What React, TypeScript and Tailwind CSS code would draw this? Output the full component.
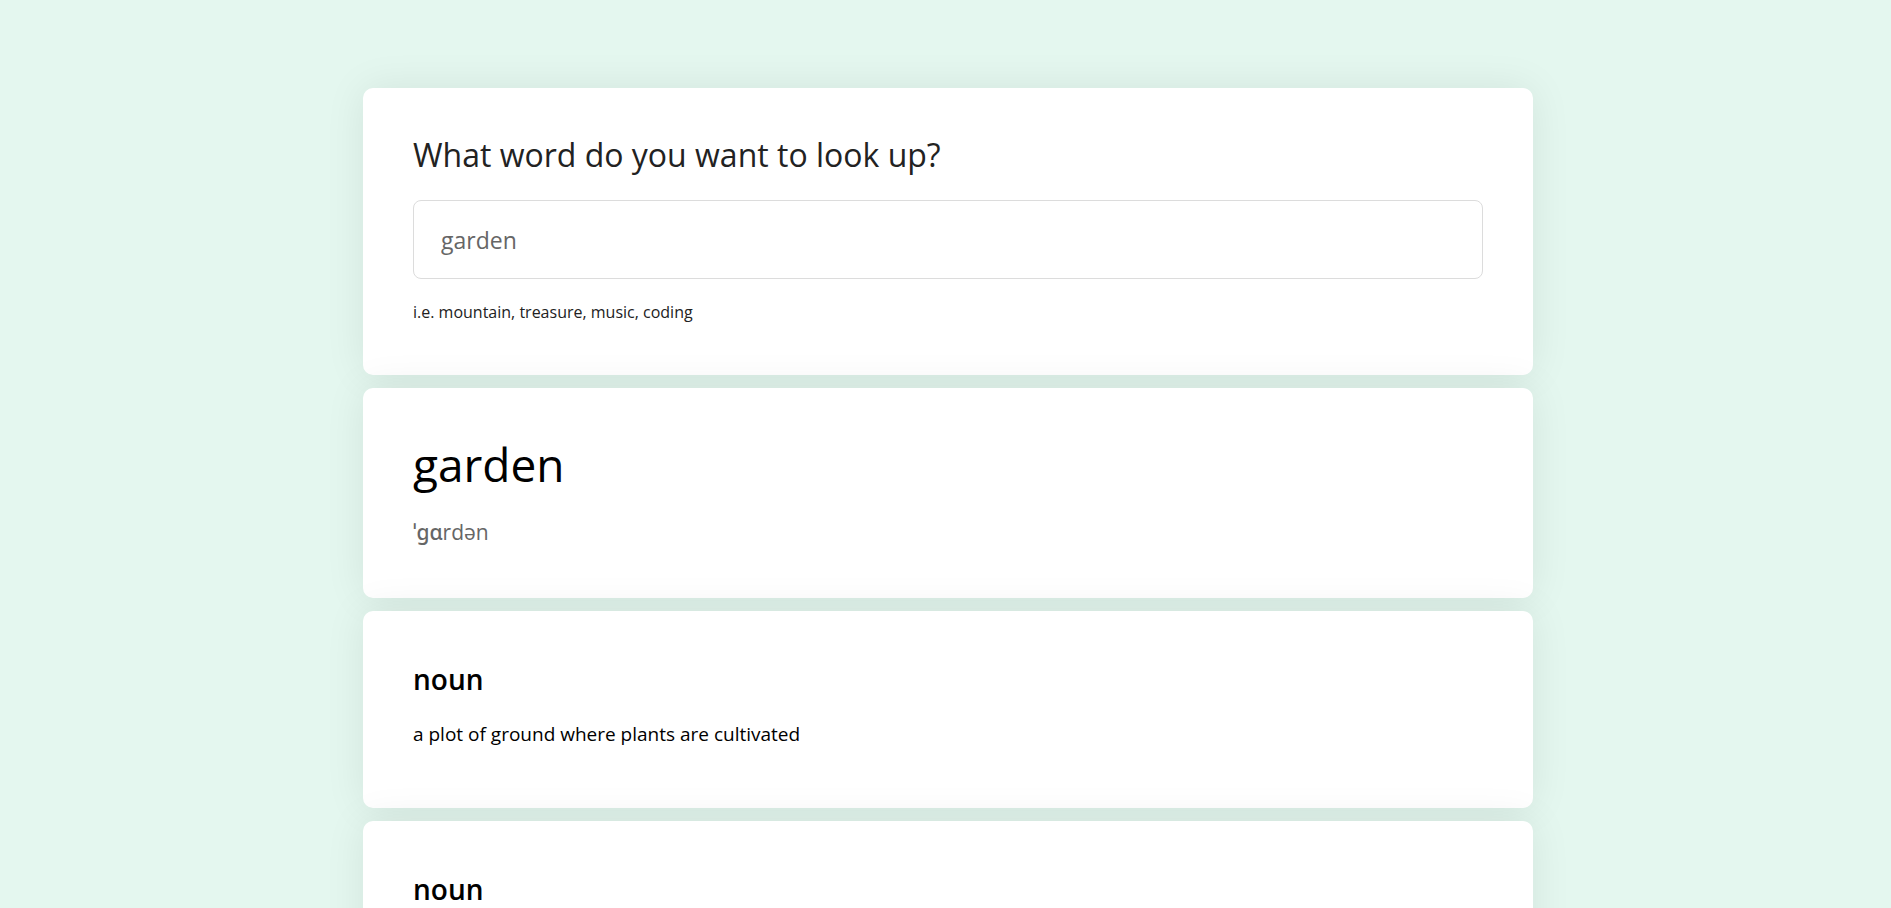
import React from "react";

const font = { fontFamily: '"Open Sans", "Noto Sans", sans-serif' };

function Card({ children, className = "" }: { children: React.ReactNode; className?: string }) {
  return (
    <section
      className={`bg-white rounded-[10px] px-[50px] shadow-[0_0_40px_rgba(0,0,0,0.08)] ${className}`}
    >
      {children}
    </section>
  );
}

export default function App() {
  return (
    <div className="min-h-screen bg-[#e4f7ef] pt-[88px] pb-10 pl-[5px]" style={font}>
      <div className="mx-auto w-[1170px] flex flex-col gap-[13px]">
        <Card className="pt-[47px] pb-[53px]">
          <h1 className="text-[32px] leading-[40px] text-[#222] font-normal">
            What word do you want to look up?
          </h1>
          <input
            type="search"
            placeholder="garden"
            className="mt-[25px] block w-full h-[79px] rounded-lg border border-[#dcdcdc] px-[27px] text-[23px] text-[#555] placeholder:text-[#666] outline-none"
          />
          <p className="mt-[23px] text-[16px] leading-[20px] text-[#222]">
            i.e. mountain, treasure, music, coding
          </p>
        </Card>

        <Card className="pt-[48px] pb-[54px]">
          <h2 className="text-[46px] leading-[56px] text-black font-normal">garden</h2>
          <div className="mt-[28px] text-[21px] leading-[24px] text-[#666] font-medium">
            ˈɡɑrdən
          </div>
        </Card>

        <Card className="pt-[51px] pb-[62px]">
          <h3 className="text-[28px] leading-[34px] text-black font-semibold">noun</h3>
          <p className="mt-[26px] text-[19px] leading-[24px] text-black">
            a plot of ground where plants are cultivated
          </p>
        </Card>

        <Card className="pt-[51px] pb-[62px]">
          <h3 className="text-[28px] leading-[34px] text-black font-semibold">noun</h3>
          <p className="mt-[26px] text-[19px] leading-[24px] text-black">
            the flowers or vegetables or fruits or herbs that are cultivated in a garden
          </p>
        </Card>
      </div>
    </div>
  );
}
